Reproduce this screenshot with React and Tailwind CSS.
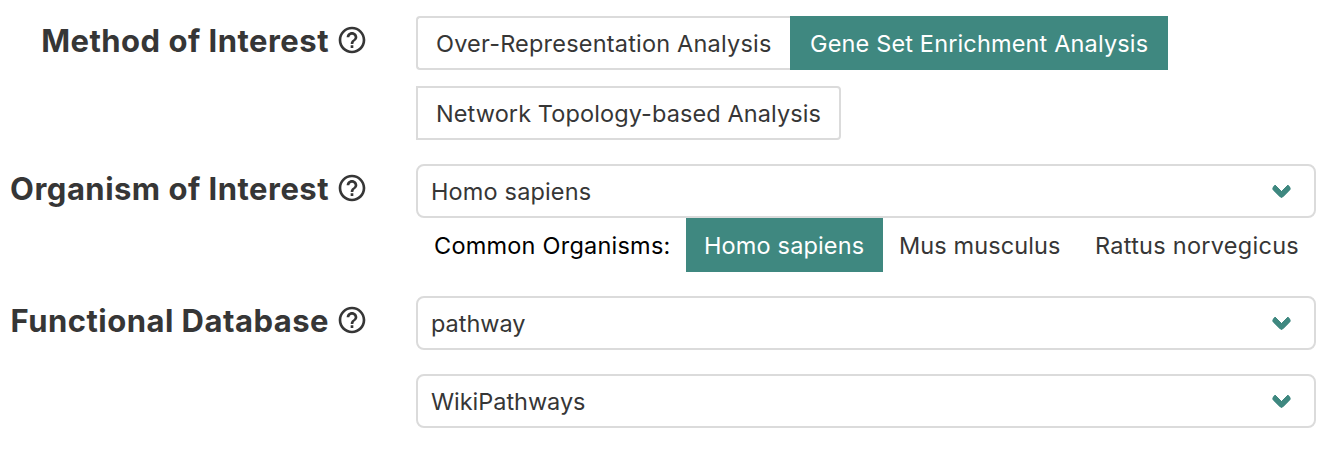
function Help() {
  return (
    <svg className="-mr-[3px] h-8 w-8 shrink-0" viewBox="0 0 24 24" fill="#363636" aria-hidden="true">
      <path d="M11 18h2v-2h-2v2zm1-16C6.48 2 2 6.48 2 12s4.48 10 10 10 10-4.48 10-10S17.52 2 12 2zm0 18c-4.41 0-8-3.59-8-8s3.59-8 8-8 8 3.59 8 8-3.59 8-8 8zm0-14c-2.21 0-4 1.79-4 4h2c0-1.1.9-2 2-2s2 .9 2 2c0 2-3 1.75-3 5h2c0-2.25 3-2.5 3-5 0-2.21-1.79-4-4-4z" />
    </svg>
  );
}

function Label({ children }) {
  return (
    <div className="flex h-12 w-[365px] shrink-0 items-center justify-end gap-[7px] text-[31px] font-bold leading-[48px] whitespace-nowrap text-[#363636]">
      <span className="pt-[2px] tracking-[0.48px]">{children}</span>
      <Help />
    </div>
  );
}

function Select({ children }) {
  return (
    <div className="flex h-[54px] items-center justify-between rounded-[8px] border-2 border-[#dbdbdb] pr-[25px] pl-[13px]">
      <span className="pt-[2px]">{children}</span>
      <span className="mb-[6px] h-[15px] w-[15px] -rotate-45 rounded-[4px] border-b-[6px] border-l-[6px] border-[#3f8880]" />
    </div>
  );
}

export default function App() {
  return (
    <main className="h-[450px] w-[1336px] overflow-hidden bg-white font-['Inter',sans-serif] text-[23.5px] leading-9 tracking-[0.15px] text-[#363636]">
      <section className="flex gap-[51px] pt-4">
        <Label>Method of Interest</Label>
        <div className="flex w-[900px] flex-wrap gap-y-4">
          <div className="flex h-[54px] w-[374px] items-center rounded-l-[4px] border-2 border-r-0 border-[#dbdbdb] pt-[2px] pl-[18px] tracking-[0.2px] whitespace-nowrap">Over-Representation Analysis</div>
          <div className="flex h-[54px] w-[378px] items-center bg-[#3f8880] pt-[2px] pl-5 whitespace-nowrap text-white">Gene Set Enrichment Analysis</div>
          <div className="flex h-[54px] w-[425px] items-center rounded-r-[4px] border-2 border-[#dbdbdb] pt-[2px] pl-[18px] tracking-[0.1px] whitespace-nowrap">Network Topology-based Analysis</div>
        </div>
      </section>
      <section className="mt-6 flex gap-[51px]">
        <Label>Organism of Interest</Label>
        <div className="w-[900px]">
          <Select>Homo sapiens</Select>
          <div className="flex h-[54px] items-stretch leading-[56px] whitespace-nowrap">
            <span className="w-[270px] pl-[18px] tracking-[0.22px] text-black">Common Organisms:</span>
            <span className="w-[197px] bg-[#3f8880] pl-[18px] text-white">Homo sapiens</span>
            <span className="w-[195px] pl-4 tracking-[0.1px]">Mus musculus</span>
            <span className="pl-[17px] tracking-[0.27px]">Rattus norvegicus</span>
          </div>
        </div>
      </section>
      <section className="mt-6 flex gap-[51px]">
        <Label>Functional Database</Label>
        <div className="flex w-[900px] flex-col gap-6">
          <Select><span className="tracking-[-0.04px]">pathway</span></Select>
          <Select><span className="tracking-[-0.04px]">WikiPathways</span></Select>
        </div>
      </section>
    </main>
  );
}
